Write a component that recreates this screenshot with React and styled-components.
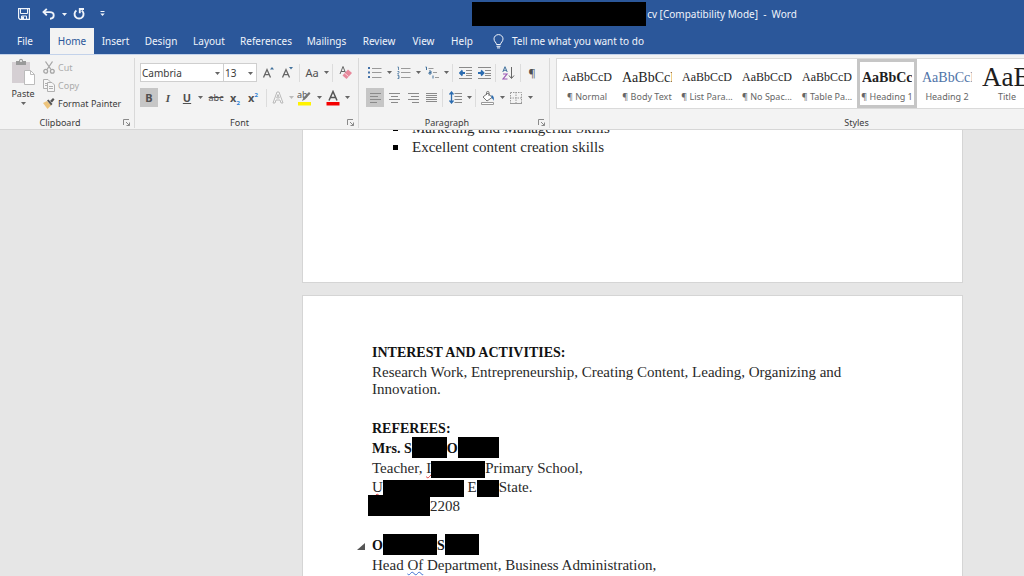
import React from 'react';
import styled, { createGlobalStyle, css } from 'styled-components';

const UI_FONT = '"Noto Sans", "Open Sans", sans-serif';
const DOC_FONT = '"Liberation Serif", serif';

const GlobalStyle = createGlobalStyle`
  * {
    box-sizing: border-box;
  }

  body {
    margin: 0;
    overflow: hidden;
    font-family: ${UI_FONT};
    font-size: 10px;
    color: #3b3b3b;
  }

  button, select {
    font: inherit;
    color: inherit;
    border: none;
    padding: 0;
    background: transparent;
  }
`;

const Window = styled.div`
  display: flex;
  flex-direction: column;
  height: 100vh;
  background: #e6e6e6;
`;

/* Title bar */

const TitleBar = styled.header`
  display: flex;
  align-items: center;
  height: 28px;
  flex-shrink: 0;
  background: #2b579a;
  color: #f0f4fa;
`;

const QuickAccess = styled.div`
  display: flex;
  align-items: center;
  flex: 0 0 245px;
  padding-left: 14px;
`;

const QuickButton = styled.button`
  display: flex;
  align-items: center;
  justify-content: center;
  width: ${(p) => p.$w}px;
  height: 20px;
`;

const Title = styled.div`
  display: flex;
  flex: 1;
  align-items: center;
  justify-content: center;
  line-height: 14px;
  white-space: pre;
`;

const TitleRedaction = styled.span`
  width: 174px;
  height: 24px;
  margin-right: 1px;
  background: #000000;
`;

/* Tabs */

const TabBar = styled.nav`
  display: flex;
  height: 26px;
  flex-shrink: 0;
  background: #2b579a;
  color: #f0f4fa;
`;

const Tab = styled.button`
  min-width: ${(p) => p.$w}px;
  height: 26px;
  font-size: 10px;

  ${(p) =>
    p.$active &&
    css`
      background: #f3f3f3;
      color: #2b579a;
    `}
`;

const TellMe = styled.button`
  display: flex;
  align-items: center;
  gap: 8px;
  margin-left: 12px;
`;

/* Ribbon */

const Ribbon = styled.section`
  display: flex;
  height: 76px;
  flex-shrink: 0;
  overflow: hidden;
  padding-top: 3px;
  background: #f3f3f3;
  border-top: 1px solid #c3d2ea;
  border-bottom: 1px solid #d6d6d6;
`;

const Group = styled.div`
  display: flex;
  flex-direction: column;
  flex: ${(p) => (p.$grow ? 1 : 0)} 0 ${(p) => p.$w}px;
  height: 70px;
  border-right: 1px solid #d9d9d9;
`;

const GroupBody = styled.div`
  display: flex;
  flex: 1;
  padding: ${(p) => p.$pad || '0'};
`;

const GroupFooter = styled.div`
  display: flex;
  align-items: center;
  height: 11px;
  padding-right: 3px;
  font-size: 9px;
`;

const GroupName = styled.span`
  flex: 1;
  padding-right: 3px;
  text-align: center;
`;

const Launcher = styled.button`
  display: flex;
  width: 8px;
  height: 8px;
`;

const Rows = styled.div`
  display: flex;
  flex-direction: column;
  gap: 6px;
`;

const Row = styled.div`
  display: flex;
  align-items: center;
  height: 19px;
`;

const Tool = styled.button`
  display: flex;
  align-items: center;
  justify-content: center;
  width: ${(p) => p.$w || 18}px;
  height: 19px;
  background: ${(p) => (p.$active ? '#c6c6c6' : 'transparent')};
`;

const Divider = styled.span`
  width: 1px;
  height: 18px;
  margin: 0 2px;
  background: #dcdcdc;
`;

const ComboBox = styled.label`
  position: relative;
  display: flex;
  width: ${(p) => p.$w}px;
  height: 19px;
  margin-right: ${(p) => (p.$last ? '2px' : '-1px')};
  background: #ffffff;
  border: 1px solid #cfcfcf;

  select {
    appearance: none;
    width: 100%;
    padding-left: 1px;
    outline: none;
  }

  svg {
    position: absolute;
    right: 3px;
    top: 8px;
    pointer-events: none;
  }
`;

const PasteButton = styled.button`
  display: flex;
  flex-direction: column;
  align-items: center;
  width: 30px;
  height: 52px;
  gap: 2px;
  font-size: 9px;
`;

const ClipList = styled.div`
  display: flex;
  flex-direction: column;
  padding-left: 5px;
`;

const ClipItem = styled.button`
  display: flex;
  align-items: center;
  gap: 3px;
  height: 18px;
  font-size: 9px;
  color: ${(p) => (p.$off ? '#ababab' : '#3b3b3b')};
`;

/* Style gallery */

const Gallery = styled.div`
  display: flex;
  flex: 1;
  height: 51px;
  background: #ffffff;
  border: 1px solid #dadada;
`;

const StyleCard = styled.button`
  display: flex;
  flex-direction: column;
  align-items: center;
  flex: 0 0 60px;
  min-width: 0;
  height: 49px;
  padding-top: 3px;
  border: 3px solid ${(p) => (p.$active ? '#c6c6c6' : 'transparent')};
`;

const Sample = styled.span`
  display: flex;
  align-items: center;
  width: 50px;
  height: 25px;
  overflow: hidden;
  white-space: nowrap;
  font-family: ${DOC_FONT};
  font-size: ${(p) => p.$size || 12}px;
  font-weight: ${(p) => (p.$bold ? 700 : 400)};
  color: ${(p) => p.$color || '#1e1e1e'};
`;

const StyleName = styled.span`
  line-height: 14px;
  font-size: 9px;
  white-space: nowrap;
  color: #666666;
`;

/* Document */

const Canvas = styled.main`
  display: flex;
  flex: 1;
  flex-direction: column;
  gap: 12px;
  min-height: 0;
  overflow: hidden;
  padding: 0 61px 0 302px;
  font-family: ${DOC_FONT};
  font-size: 15px;
  line-height: 17px;
  color: #2a2a2a;
`;

const Page = styled.article`
  flex-shrink: 0;
  background: #ffffff;
  border: 1px solid #d5d5d5;
  padding: 48px 69px 0;

  &:first-child {
    height: 165px;
    margin-top: -12px;
    padding-top: 0;
  }

  &:last-child {
    flex: 1 0 auto;
  }
`;

const SkillList = styled.ul`
  list-style: none;
  margin: 0;
  padding-left: 21px;

  li {
    display: flex;
    align-items: center;
    height: 19px;
  }

  li::before {
    content: '';
    width: 5px;
    height: 5px;
    margin-right: 14px;
    background: #000000;
  }
`;

const Heading = styled.h2`
  margin: 0 0 3px;
  min-height: 17px;
  font-size: 14px;
  line-height: 17px;
  color: #111111;
`;

const Para = styled.p`
  margin: 0 0 2px;
`;

const Blank = styled.div`
  height: 20px;
`;

/* sits 5px under the baseline without making its line taller */
const Redacted = styled.span`
  display: inline-block;
  width: ${(p) => p.$w}px;
  height: ${(p) => (p.$tall ? 21 : 17)}px;
  margin: -8px 0 -5px ${(p) => (p.$outdent ? '-4px' : '0')};
  vertical-align: baseline;
  background: #000000;
`;

const Misspelt = styled.span`
  text-decoration: underline wavy ${(p) => p.$color || '#e03c3c'} 1px;
  text-underline-offset: 1px;
`;

const Foldable = styled(Heading)`
  margin-left: -15px;

  button {
    width: 15px;
    text-align: left;
  }
`;

/* Icons */

const Caret = ({ color = '#666666' }) => (
  <svg width="5" height="3" viewBox="0 0 5 3">
    <path d="M0 0h5L2.5 3z" fill={color} />
  </svg>
);

const LauncherIcon = () => (
  <svg width="8" height="8" viewBox="0 0 8 8" fill="none" stroke="#8a8a8a">
    <path d="M.5 6V.5H6" />
    <path d="M3 3l3.5 3.5M6.5 3.5v3h-3" />
  </svg>
);

const SaveIcon = () => (
  <svg width="12" height="12" viewBox="0 0 12 12" fill="none" stroke="#f0f4fa">
    <path d="M.6.6h10.8v10.8H2L.6 10z" strokeWidth="1.2" />
    <path d="M2.500 1v4.500h7V1" />
    <path d="M3.500 11V8h5v3" />
    <path d="M4 8.500h2V11H4z" fill="#f0f4fa" stroke="none" />
  </svg>
);

const UndoIcon = () => (
  <svg width="13" height="12" viewBox="0 0 13 12" fill="none" stroke="#f0f4fa" strokeWidth="1.9">
    <path d="M4.8.8L1.500 4.100l3.300 3.300" />
    <path d="M1.800 4.100h6c2.500 0 3.900 1.300 3.900 3.200S10.300 10.700 8 10.700" />
  </svg>
);

const RedoIcon = () => (
  <svg width="12" height="12" viewBox="0 0 12 12" fill="none" stroke="#f0f4fa" strokeWidth="1.9">
    <path d="M3.400 2.400A4.500 4.500 0 1 0 8.700 2.400" />
    <path d="M11 1H6.800v4.200" />
  </svg>
);

const CustomizeIcon = () => (
  <svg width="5" height="6" viewBox="0 0 5 6" fill="#f0f4fa">
    <path d="M.5 0h4v1h-4zM.3 2.500h4.400L2.500 5z" />
  </svg>
);

const BulbIcon = () => (
  <svg width="11" height="15" viewBox="0 0 11 15" fill="none" stroke="#f0f4fa">
    <path d="M3.500 10.500C3.500 8.500 1 7.700 1 4.900a4.500 4.300 0 0 1 9 0c0 2.800-2.500 3.600-2.500 5.600z" />
    <path d="M3.500 12.300h4M4 13.900h3" />
  </svg>
);

const PasteIcon = () => (
  <svg width="24" height="27" viewBox="0 0 24 27">
    <path d="M1 4h18v21H1z" fill="#d5cfd3" />
    <path d="M5 3h3c0-3 4-3 4 0h3v4H5z" fill="#9a9a9a" />
    <circle cx="10" cy="3" r="1" fill="#f3f3f3" />
    <path d="M13.500 12.500h6l4 4v10h-10z" fill="#ffffff" stroke="#bcbcbc" />
    <path d="M19.500 12.500v4h4" fill="none" stroke="#bcbcbc" />
  </svg>
);

const CutIcon = () => (
  <svg width="12" height="13" viewBox="0 0 12 13" fill="none" stroke="#a5a5a5" strokeWidth="1.3">
    <path d="M2.500.5l5.500 8M9.500.5L4 8.500" />
    <circle cx="2.700" cy="10.200" r="1.900" />
    <circle cx="9.300" cy="10.200" r="1.900" />
  </svg>
);

const CopyIcon = () => (
  <svg width="12" height="13" viewBox="0 0 12 13" fill="#f7f7f7" stroke="#b0b0b0">
    <path d="M.5.5h4.500l2 2v7H.5z" />
    <path d="M2 4.500h3M2 6.500h3" />
    <path d="M4.500 3.500h4.500l2.500 2.500v6.500h-7z" />
    <path d="M6 7.500h4M6 9.500h4" />
  </svg>
);

const PainterIcon = () => (
  <svg width="12" height="11" viewBox="0 0 12 11">
    <path d="M0 5l4-2 4 4.500L4.500 11z" fill="#edc47c" />
    <path d="M4 2.500l1.500-1 4 4.500-1.500 1.500z" fill="#555555" />
    <path d="M7 3l3-3 1.500 1.500-2.500 3z" fill="#555555" />
  </svg>
);

const GrowFont = ({ shrink }) => (
  <svg width="12" height="14" viewBox="0 0 12 14" fill="none">
    <path d="M1.500 11.500L5 3.500l3.500 8M2.700 8.700h4.600" stroke="#666666" strokeWidth="1.3" />
    <path d={shrink ? 'M8 1h4L10 3.500z' : 'M8 3.500h4L10 1z'} fill="#41719c" />
  </svg>
);

const ClearIcon = () => (
  <svg width="13" height="15" viewBox="0 0 13 15">
    <path d="M1 9l3-7.500L7 9M2 6.500h4" fill="none" stroke="#666666" />
    <path d="M9 4.500l4 3.500-5.500 6-4-3.500z" fill="#e8899c" />
    <path d="M5.500 8l4 3.500" stroke="#f7d3da" />
  </svg>
);

const OutlineA = () => (
  <svg width="12" height="13" viewBox="0 0 12 13" fill="#f8f8f8" stroke="#b9b9b9">
    <path d="M1 12L5 1h2l4 11H9L8 9H4l-1 3zM4.700 7h2.600L6 3.500z" />
  </svg>
);

const HighlightIcon = () => (
  <svg width="16" height="16" viewBox="0 0 16 16">
    <text x="0" y="8" fontSize="9" fontFamily="Noto Sans" fill="#555555">ab</text>
    <path d="M5 11l1.500-3.500L12 2l1.500 1.500L8 9.500z" fill="#777777" />
    <path d="M1 12h13v3.500H1z" fill="#fff200" />
  </svg>
);

const FontColorIcon = () => (
  <svg width="14" height="16" viewBox="0 0 14 16">
    <path d="M3 10.500L7 1.500l4 9M4.500 7.500h5" fill="none" stroke="#555555" strokeWidth="1.5" />
    <path d="M.5 12h13v3.500H.5z" fill="#f40000" />
  </svg>
);

const ListIcon = ({ numbered }) => (
  <svg width="14" height="13" viewBox="0 0 14 13">
    {numbered ? (
      <path d="M.5 1h1v3M.5 5.500H2v1L.5 8H2M.5 9.500H2v3H.5M1 11h1" fill="none" stroke="#41719c" strokeWidth=".8" />
    ) : (
      <path d="M0 1h2v2H0zM0 5.500h2v2H0zM0 10h2v2H0z" fill="#4472a8" />
    )}
    <path d="M4 2.500h9.500M4 6.500h9.500M4 11.500h9.500" stroke="#9a9a9a" />
  </svg>
);

const MultiListIcon = () => (
  <svg width="15" height="13" viewBox="0 0 15 13" fill="none">
    <path d="M.5 1h1v3M4 5h2v3H4V6.500h2M8 9.500v3" stroke="#41719c" />
    <path d="M3.500 2.500h5M8 6.500h4M10 11.500h4" stroke="#9a9a9a" />
  </svg>
);

const IndentIcon = ({ right }) => (
  <svg width="13" height="12" viewBox="0 0 13 12" fill="none">
    <path d="M0 .5h13M7 3.500h6M7 6.500h6M7 8.500h6M0 11.500h13" stroke="#8a8a8a" />
    <path
      d={right ? 'M0 6h5M3 3.500L5.500 6 3 8.500' : 'M1 6h5M3.500 3.500L1 6l2.500 2.500'}
      stroke="#2b6cb0"
      strokeWidth="1.8"
    />
  </svg>
);

const SortIcon = () => (
  <svg width="13" height="14" viewBox="0 0 13 14" fill="none">
    <path d="M.8 6L3 .7 5.200 6M1.500 4.300h3" stroke="#41719c" />
    <path d="M1 8h4l-4 5h4.500" stroke="#9b59b6" strokeWidth="1.2" />
    <path d="M9.500 1v11M7 9.500l2.500 3 2.500-3" stroke="#666666" />
  </svg>
);

const alignLines = {
  left: 'M0 1.500h11M0 4.500h8M0 7.500h11M0 10.500h7',
  center: 'M0 1.500h11M2 4.500h7M0 7.500h11M2 10.500h7',
  right: 'M0 1.500h11M3 4.500h8M0 7.500h11M4 10.500h7',
  justify: 'M0 1.500h11M0 3.500h11M0 5.500h11M0 7.500h11M0 9.500h11',
};

const AlignIcon = ({ kind }) => (
  <svg width="11" height="12" viewBox="0 0 11 12">
    <path d={alignLines[kind]} stroke="#8a8a8a" />
  </svg>
);

const SpacingIcon = () => (
  <svg width="13" height="13" viewBox="0 0 13 13" fill="none">
    <path d="M5.500 2.500H13M5.500 5.500H13M5.500 8.500H13M5.500 11.500H13" stroke="#8a8a8a" />
    <path d="M2.500 1v11M.5 3.500l2-2.500 2 2.500M.5 9.500l2 2.500 2-2.500" stroke="#2b6cb0" strokeWidth="1.3" />
  </svg>
);

const ShadingIcon = () => (
  <svg width="14" height="14" viewBox="0 0 14 14" fill="none">
    <path d="M2 6l5-4 4 4.500-5 3.500z" fill="#ffffff" stroke="#777777" />
    <path d="M5.500 4V1.500c0-1.500 2.500-1.500 2.500 0V5" stroke="#777777" />
    <path d="M10.500 4c2 .5 3 2.500 2 6-.5-2-1-2.500-2-3z" fill="#2b6cb0" />
    <path d="M.5 11.500h12v2H.5z" fill="#ffffff" stroke="#999999" />
  </svg>
);

const BordersIcon = () => (
  <svg width="12" height="12" viewBox="0 0 12 12" fill="none" stroke="#9a9a9a">
    <path d="M.5.5h11v11H.5zM6 0v12M0 6h12" strokeDasharray="1.5 1" />
    <path d="M0 11.500h12" />
  </svg>
);

const Glyph = styled.span`
  font-size: 11px;
  color: #505050;
  font-weight: ${(p) => (p.$bold ? 700 : 400)};
  font-style: ${(p) => (p.$italic ? 'italic' : 'normal')};
  font-family: ${(p) => (p.$italic ? DOC_FONT : UI_FONT)};
  text-decoration: ${(p) => p.$line || 'none'};

  sub, sup {
    font-size: 6px;
    line-height: 0;
    color: #2b7cd3;
  }
`;

const SmallGlyph = styled(Glyph)`
  font-size: 9px;
`;

const tabs = [
  { name: 'File', w: 50 },
  { name: 'Home', w: 44, active: true },
  { name: 'Insert', w: 43 },
  { name: 'Design', w: 48 },
  { name: 'Layout', w: 48 },
  { name: 'References', w: 66 },
  { name: 'Mailings', w: 55 },
  { name: 'Review', w: 50 },
  { name: 'View', w: 39 },
  { name: 'Help', w: 38 },
];

const styleCards = [
  { name: '¶ Normal', sample: 'AaBbCcDc' },
  { name: '¶ Body Text', sample: 'AaBbCcD', size: 14 },
  { name: '¶ List Para...', sample: 'AaBbCcDc' },
  { name: '¶ No Spac...', sample: 'AaBbCcDc' },
  { name: '¶ Table Pa...', sample: 'AaBbCcDc' },
  { name: '¶ Heading 1', sample: 'AaBbCc', size: 14, bold: true, active: true },
  { name: 'Heading 2', sample: 'AaBbCcD', size: 14, color: '#4f74a8' },
  { name: 'Title', sample: 'AaB', size: 27 },
];

const RibbonGroup = ({ name, w, pad, grow, children }) => (
  <Group $w={w} $grow={grow}>
    <GroupBody $pad={pad}>{children}</GroupBody>
    <GroupFooter>
      <GroupName>{name}</GroupName>
      {!grow && (
        <Launcher aria-label={`${name} settings`}>
          <LauncherIcon />
        </Launcher>
      )}
    </GroupFooter>
  </Group>
);

const Arrow = ({ w = 8, color, label }) => (
  <Tool $w={w} aria-label={label}>
    <Caret color={color} />
  </Tool>
);

const ClipboardGroup = () => (
  <RibbonGroup name="Clipboard" w={135} pad="0 0 0 8px">
    <PasteButton>
      <PasteIcon />
      <span>Paste</span>
      <Caret />
    </PasteButton>
    <ClipList>
      <ClipItem $off>
        <CutIcon />
        Cut
      </ClipItem>
      <ClipItem $off>
        <CopyIcon />
        Copy
      </ClipItem>
      <ClipItem>
        <PainterIcon />
        Format Painter
      </ClipItem>
    </ClipList>
  </RibbonGroup>
);

const FontGroup = () => (
  <RibbonGroup name="Font" w={224} pad="5px 0 0 5px">
    <Rows>
      <Row>
        <ComboBox $w={84}>
          <select aria-label="Font" defaultValue="Cambria">
            <option>Cambria</option>
          </select>
          <Caret />
        </ComboBox>
        <ComboBox $w={34} $last>
          <select aria-label="Font size" defaultValue="13">
            <option>13</option>
          </select>
          <Caret />
        </ComboBox>
        <Tool aria-label="Grow font"><GrowFont /></Tool>
        <Tool $w={20} aria-label="Shrink font"><GrowFont shrink /></Tool>
        <Divider />
        <Tool $w={20}><Glyph>Aa</Glyph></Tool>
        <Arrow label="Change case" />
        <Divider />
        <Tool $w={20} aria-label="Clear formatting"><ClearIcon /></Tool>
      </Row>
      <Row>
        <Tool $active><Glyph $bold>B</Glyph></Tool>
        <Tool $w={20}><Glyph $bold $italic>I</Glyph></Tool>
        <Tool><Glyph $bold $line="underline">U</Glyph></Tool>
        <Arrow label="Underline style" />
        <Tool $w={24}><SmallGlyph $line="line-through">abc</SmallGlyph></Tool>
        <Tool $w={14}><Glyph $bold>x<sub>2</sub></Glyph></Tool>
        <Tool $w={22}><Glyph $bold>x<sup>2</sup></Glyph></Tool>
        <Divider />
        <Tool aria-label="Text effects"><OutlineA /></Tool>
        <Arrow color="#bbbbbb" label="Text effects options" />
        <Tool $w={20} aria-label="Highlight"><HighlightIcon /></Tool>
        <Arrow label="Highlight color" />
        <Tool $w={20} aria-label="Font color"><FontColorIcon /></Tool>
        <Arrow label="Font color options" />
      </Row>
    </Rows>
  </RibbonGroup>
);

const ParagraphGroup = () => (
  <RibbonGroup name="Paragraph" w={191} pad="5px 0 0 7px">
    <Rows>
      <Row>
        <Tool aria-label="Bullets"><ListIcon /></Tool>
        <Arrow w={10} label="Bullet library" />
        <Tool $w={20} aria-label="Numbering"><ListIcon numbered /></Tool>
        <Arrow label="Numbering library" />
        <Tool $w={20} aria-label="Multilevel list"><MultiListIcon /></Tool>
        <Arrow label="List library" />
        <Divider />
        <Tool $w={20} aria-label="Decrease indent"><IndentIcon /></Tool>
        <Tool aria-label="Increase indent"><IndentIcon right /></Tool>
        <Divider />
        <Tool $w={20} aria-label="Sort"><SortIcon /></Tool>
        <Divider />
        <Tool><Glyph>¶</Glyph></Tool>
      </Row>
      <Row>
        <Tool $active aria-label="Align left"><AlignIcon kind="left" /></Tool>
        <Tool $w={20} aria-label="Center"><AlignIcon kind="center" /></Tool>
        <Tool aria-label="Align right"><AlignIcon kind="right" /></Tool>
        <Tool aria-label="Justify"><AlignIcon kind="justify" /></Tool>
        <Divider />
        <Tool $w={20} aria-label="Line spacing"><SpacingIcon /></Tool>
        <Arrow label="Line spacing options" />
        <Divider />
        <Tool $w={20} aria-label="Shading"><ShadingIcon /></Tool>
        <Arrow label="Shading color" />
        <Tool $w={20} aria-label="Borders"><BordersIcon /></Tool>
        <Arrow label="Border options" />
      </Row>
    </Rows>
  </RibbonGroup>
);

const StylesGroup = () => (
  <RibbonGroup name="Styles" w={620} pad="0 0 0 6px" grow>
    <Gallery>
      {styleCards.map((card) => (
        <StyleCard key={card.name} $active={card.active}>
          <Sample $size={card.size} $bold={card.bold} $color={card.color}>
            {card.sample}
          </Sample>
          <StyleName>{card.name}</StyleName>
        </StyleCard>
      ))}
    </Gallery>
  </RibbonGroup>
);

const App = () => (
  <Window>
    <GlobalStyle />
    <TitleBar>
      <QuickAccess>
        <QuickButton $w={20} aria-label="Save"><SaveIcon /></QuickButton>
        <QuickButton $w={28} aria-label="Undo"><UndoIcon /></QuickButton>
        <QuickButton $w={5} aria-label="Undo history"><Caret color="#f0f4fa" /></QuickButton>
        <QuickButton $w={24} aria-label="Redo"><RedoIcon /></QuickButton>
        <QuickButton $w={22} aria-label="Customize toolbar"><CustomizeIcon /></QuickButton>
      </QuickAccess>
      <Title>
        <TitleRedaction />
        {'cv [Compatibility Mode]  -  Word'}
      </Title>
    </TitleBar>

    <TabBar>
      {tabs.map((tab) => (
        <Tab key={tab.name} $w={tab.w} $active={tab.active}>
          {tab.name}
        </Tab>
      ))}
      <TellMe>
        <BulbIcon />
        Tell me what you want to do
      </TellMe>
    </TabBar>

    <Ribbon>
      <ClipboardGroup />
      <FontGroup />
      <ParagraphGroup />
      <StylesGroup />
    </Ribbon>

    <Canvas>
      <Page>
        <SkillList>
          <li>Marketing and Managerial Skills</li>
          <li>Excellent content creation skills</li>
        </SkillList>
      </Page>
      <Page>
        <Heading>INTEREST AND ACTIVITIES:</Heading>
        <Para>
          Research Work, Entrepreneurship, Creating Content, Leading, Organizing and Innovation.
        </Para>
        <Blank />
        <Heading>REFEREES:</Heading>
        <Heading>
          Mrs. S<Redacted $w={35} $tall />O<Redacted $w={41} $tall />
        </Heading>
        <Para>
          Teacher, <Misspelt>I</Misspelt>
          <Redacted $w={54} />Primary School,
        </Para>
        <Para>
          <Misspelt>U</Misspelt>
          <Redacted $w={81} /> E<Redacted $w={22} />State.
        </Para>
        <Para>
          <Redacted $w={62} $tall $outdent />2208
        </Para>
        <Blank />
        <Foldable>
          <button aria-label="Collapse heading">
            <svg width="8" height="7" viewBox="0 0 8 7">
              <path d="M8 0v7H0z" fill="#555555" />
            </svg>
          </button>
          O<Redacted $w={54} $tall />S<Redacted $w={34} $tall />
        </Foldable>
        <Para>
          Head <Misspelt $color="#3f6fd0">Of</Misspelt> Department, Business Administration,
        </Para>
      </Page>
    </Canvas>
  </Window>
);

export default App;
